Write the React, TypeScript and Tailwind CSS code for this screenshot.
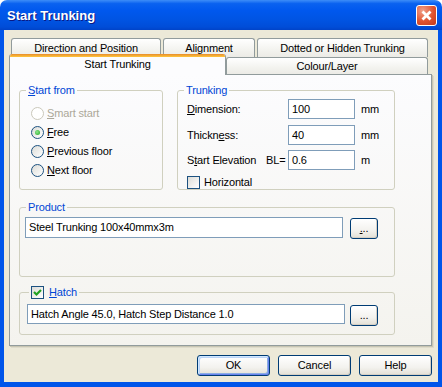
import React, { ReactNode } from 'react'

function Radio({
  accel,
  rest,
  checked,
  disabled,
}: {
  accel: string
  rest: string
  checked?: boolean
  disabled?: boolean
}) {
  return (
    <div className="flex h-[19px] items-center">
      <span
        className={`flex h-[13px] w-[13px] items-center justify-center rounded-full border ${
          disabled
            ? 'border-[#CAC8BB] bg-white'
            : 'border-[#1C5180] bg-[linear-gradient(135deg,#DCDCD7,#FFFFFF)]'
        }`}
      >
        {checked && (
          <span className="h-[5px] w-[5px] rounded-full bg-[radial-gradient(circle_at_40%_40%,#8EE88E,#1FA51F)]" />
        )}
      </span>
      <span className={`ml-[3px] ${disabled ? 'text-[#ACA899]' : ''}`}>
        <u>{accel}</u>
        {rest}
      </span>
    </div>
  )
}

function Checkbox({ checked }: { checked?: boolean }) {
  return (
    <span className="flex h-[13px] w-[13px] shrink-0 items-center justify-center border border-[#1C5180] bg-[linear-gradient(135deg,#DCDCD7,#FFFFFF)]">
      {checked && (
        <svg width="11" height="11" viewBox="0 0 11 11">
          <polyline points="2,5 4.5,7.5 9,3" fill="none" stroke="#21A121" strokeWidth="2.2" />
        </svg>
      )}
    </span>
  )
}

function Input({ value, className }: { value: string; className: string }) {
  return (
    <div className={`flex items-center border border-[#7F9DB9] bg-white pl-[3px] ${className}`}>
      {value}
    </div>
  )
}

function XpButton({
  children,
  className,
  isDefault,
}: {
  children: ReactNode
  className: string
  isDefault?: boolean
}) {
  return (
    <button
      type="button"
      className={`flex items-center justify-center rounded-[3px] border border-[#003C74] bg-[linear-gradient(#FFFFFF,#F3F2EE_60%,#E3E0D6)] ${
        isDefault
          ? 'shadow-[inset_1px_1px_0_#CEE7FF,inset_-1px_-1px_0_#6982EE,inset_2px_2px_0_#BCD4F6,inset_-2px_-2px_0_#89ADE4]'
          : 'shadow-[inset_-1px_-1px_0_#D6D0C5]'
      } ${className}`}
    >
      {children}
    </button>
  )
}

function Group({
  legend,
  className,
  children,
}: {
  legend: ReactNode
  className: string
  children: ReactNode
}) {
  return (
    <fieldset className={`rounded-[3px] border border-[#D0D0BF] ${className}`}>
      <legend className="ml-[6px] px-[2px] text-[#0046D5]">{legend}</legend>
      {children}
    </fieldset>
  )
}

function Tab({ label, className }: { label: string; className: string }) {
  return (
    <div
      className={`flex justify-center rounded-t-[3px] border-x border-t border-[#919B9C] bg-[linear-gradient(#FFFFFF,#F3F3EF_60%,#ECEBE6)] ${className}`}
    >
      {label}
    </div>
  )
}

export default function App() {
  return (
    <div className="h-[387px] w-[442px] bg-white font-['Liberation_Sans',Arial,sans-serif] text-[11px] leading-[13px] tracking-[-0.15px] text-black select-none">
      <div className="flex h-full flex-col">
        {/* Title bar */}
        <div className="flex h-[30px] items-center justify-between rounded-t-[7px] bg-[linear-gradient(#3D8DF8_0%,#0A62F0_12%,#0058EE_35%,#0054E3_65%,#004DD8_90%,#0043C8_100%)] pl-[7px] pr-[5px]">
          <span className="text-[13px] font-bold tracking-normal text-white [text-shadow:1px_1px_0_#0A1883]">
            Start Trunking
          </span>
          <span className="flex h-[21px] w-[21px] items-center justify-center rounded-[3px] border border-white bg-[radial-gradient(circle_at_30%_25%,#F0A08A,#E0532F_55%,#C23A1B)]">
            <svg width="13" height="13" viewBox="0 0 13 13">
              <path d="M2.5 2.5 L10.5 10.5 M10.5 2.5 L2.5 10.5" stroke="white" strokeWidth="2.8" />
            </svg>
          </span>
        </div>

        {/* Window body */}
        <div className="flex flex-1 flex-col border-x-4 border-b-[5px] border-[#0055EA] bg-[#ECE9D8]">
          <div className="ml-[5px] mr-[6px] mt-[8px]">
            {/* Back row of tabs */}
            <div className="ml-[2px] flex h-[19px] gap-[2px]">
              <Tab label="Direction and Position" className="w-[150px] pt-[3px]" />
              <Tab label="Alignment" className="w-[92px] pt-[3px]" />
              <Tab label="Dotted or Hidden Trunking" className="w-[171px] pt-[3px]" />
            </div>
            {/* Front row of tabs */}
            <div className="relative z-10 -mt-[3px] flex h-[20px] items-end">
              <div className="-mb-px flex h-[21px] w-[217px] flex-col overflow-hidden rounded-t-[3px] border-x border-[#919B9C] bg-[#FCFCFE]">
                <div className="h-[3px] bg-[linear-gradient(#E68B2C,#FFC73C)]" />
                <div className="pt-[1px] text-center">Start Trunking</div>
              </div>
              <Tab label="Colour/Layer" className="h-[17px] w-[202px] pt-[2px]" />
            </div>

            {/* Tab panel */}
            <div className="h-[272px] border border-[#919B9C] bg-[linear-gradient(#FCFCFE,#F4F3EE)] px-[9px] pt-[9px] shadow-[1px_1px_0_#C7C5B2,2px_2px_0_#DEDBCB]">
              <div className="flex gap-[14px]">
                <Group
                  className="h-[106px] w-[144px]"
                  legend={
                    <>
                      <u>S</u>tart from
                    </>
                  }
                >
                  <div className="pl-[11px] pt-[7px]">
                    <Radio accel="S" rest="mart start" disabled />
                    <Radio accel="F" rest="ree" checked />
                    <Radio accel="P" rest="revious floor" />
                    <Radio accel="N" rest="ext floor" />
                  </div>
                </Group>

                <Group className="h-[106px] w-[218px]" legend="Trunking">
                  <div className="pl-[9px]">
                    <div className="mt-[2px] flex h-[20px] items-center">
                      <span className="w-[101px]">
                        <u>D</u>imension:
                      </span>
                      <Input value="100" className="h-[20px] w-[67px]" />
                      <span className="ml-[6px]">mm</span>
                    </div>
                    <div className="mt-[6px] flex h-[20px] items-center">
                      <span className="w-[101px]">
                        Thickn<u>e</u>ss:
                      </span>
                      <Input value="40" className="h-[20px] w-[67px]" />
                      <span className="ml-[6px]">mm</span>
                    </div>
                    <div className="mt-[5px] flex h-[20px] items-center">
                      <span className="w-[79px]">
                        S<u>t</u>art Elevation
                      </span>
                      <span className="w-[22px]">BL=</span>
                      <Input value="0.6" className="h-[20px] w-[67px]" />
                      <span className="ml-[6px]">m</span>
                    </div>
                    <div className="mt-[6px] flex items-center gap-[4px]">
                      <Checkbox />
                      <span>Horizontal</span>
                    </div>
                  </div>
                </Group>
              </div>

              <Group className="mt-[11px] h-[76px] w-[376px]" legend="Product">
                <div className="flex pl-[5px] pt-[3px]">
                  <Input value="Steel Trunking 100x40mmx3m" className="h-[21px] w-[318px]" />
                  <XpButton className="ml-[7px] mt-[1px] h-[21px] w-[28px]">
                    <u>.</u>..
                  </XpButton>
                </div>
              </Group>

              <fieldset className="mt-[9px] h-[49px] w-[376px] rounded-[3px] border border-[#D0D0BF]">
                <legend className="ml-[9px] px-[2px]">
                  <span className="flex items-center gap-[5px] text-[#0046D5]">
                    <Checkbox checked />
                    <span>
                      <u>H</u>atch
                    </span>
                  </span>
                </legend>
                <div className="flex pl-[7px] pt-[5px]">
                  <Input
                    value="Hatch Angle 45.0, Hatch Step Distance 1.0"
                    className="h-[20px] w-[318px]"
                  />
                  <XpButton className="ml-[5px] mt-[1px] h-[21px] w-[28px]">...</XpButton>
                </div>
              </fieldset>
            </div>
          </div>

          {/* Dialog buttons */}
          <div className="mr-[6px] mt-[9px] flex justify-end gap-[8px]">
            <XpButton className="h-[21px] w-[73px]" isDefault>
              OK
            </XpButton>
            <XpButton className="h-[21px] w-[73px]">Cancel</XpButton>
            <XpButton className="h-[21px] w-[73px]">Help</XpButton>
          </div>
        </div>
      </div>
    </div>
  )
}
